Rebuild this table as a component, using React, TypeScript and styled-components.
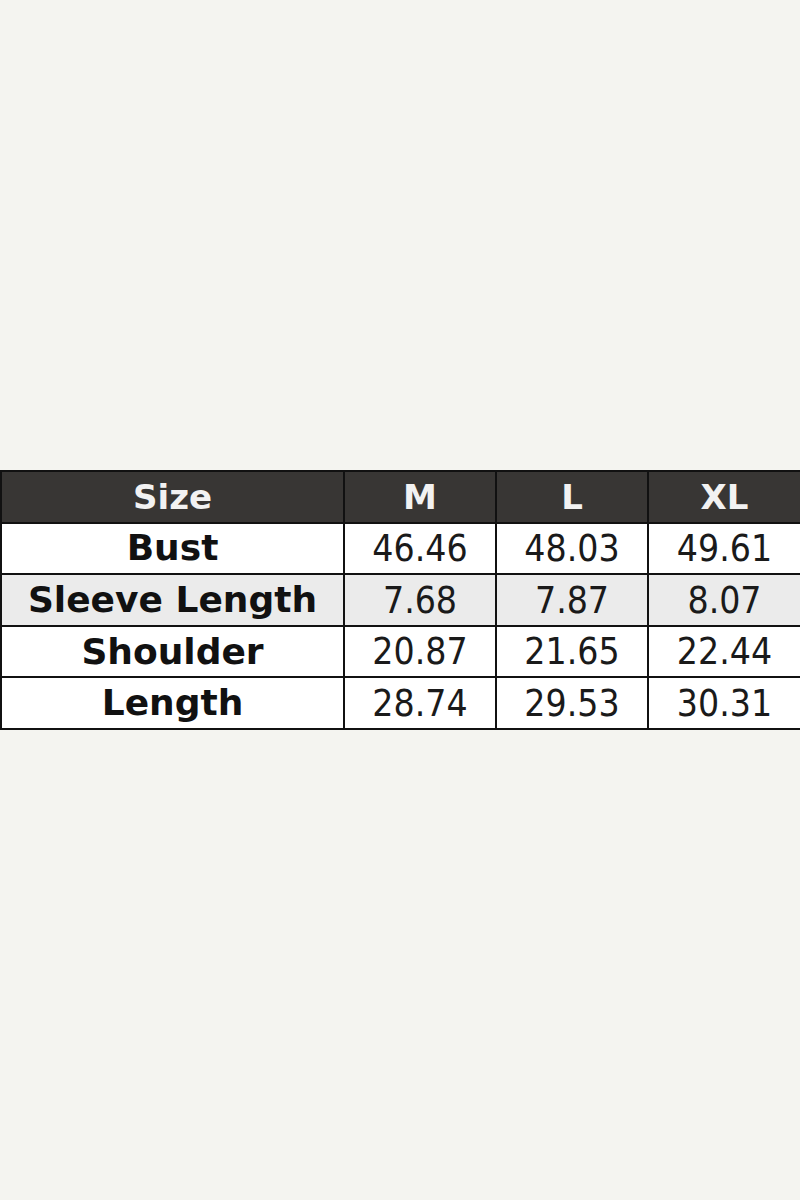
import styled, { createGlobalStyle } from "styled-components";

const GlobalStyle = createGlobalStyle`
  html, body {
    margin: 0;
    padding: 0;
    background: #f4f4f0;
  }
`;

const headers = ["Size", "M", "L", "XL"];
const rows = [
  { label: "Bust", values: ["46.46", "48.03", "49.61"] },
  { label: "Sleeve Length", values: ["7.68", "7.87", "8.07"] },
  { label: "Shoulder", values: ["20.87", "21.65", "22.44"] },
  { label: "Length", values: ["28.74", "29.53", "30.31"] },
];

function App() {
  return (
    <>
      <GlobalStyle />
      <Page>
        <SizeTable>
          <colgroup>
            <col width="343" />
            <col width="152" />
            <col width="152" />
            <col width="153" />
          </colgroup>
          <thead>
            <tr>
              {headers.map((h) => (
                <HeadCell key={h}>{h}</HeadCell>
              ))}
            </tr>
          </thead>
          <tbody>
            {rows.map((row, idx) => (
              <Row key={row.label} $shaded={idx === 1}>
                <LabelCell>{row.label}</LabelCell>
                {row.values.map((v, i) => (
                  <ValueCell key={i}>{v}</ValueCell>
                ))}
              </Row>
            ))}
          </tbody>
        </SizeTable>
      </Page>
    </>
  );
}

const Page = styled.div`
  height: 1200px;
  display: flex;
  flex-direction: column;
  justify-content: center;
`;

const SizeTable = styled.table`
  width: 800px;
  table-layout: fixed;
  border-collapse: collapse;
  border: 2px solid #111;
  td,
  th {
    border: 2px solid #111;
    height: 49.6px;
    padding: 0;
    text-align: center;
    vertical-align: middle;
    line-height: 1;
  }
`;

const HeadCell = styled.th`
  background-color: #383634;
  color: #f2f2f2;
  font-family: "DejaVu Sans", "Liberation Sans", sans-serif;
  font-weight: bold;
  font-size: 34px;
  padding-top: 2px;
`;

const Row = styled.tr<{ $shaded: boolean }>`
  background-color: ${(p) => (p.$shaded ? "#ebebeb" : "#ffffff")};
`;

const LabelCell = styled.td`
  color: #111;
  font-family: "DejaVu Sans", "Liberation Sans", sans-serif;
  font-weight: bold;
  font-size: 36px;
`;

const ValueCell = styled.td`
  color: #1a1a1a;
  font-family: "DejaVu Sans Condensed", "DejaVu Sans", sans-serif;
  font-weight: normal;
  font-size: 37px;
`;

export default App;
